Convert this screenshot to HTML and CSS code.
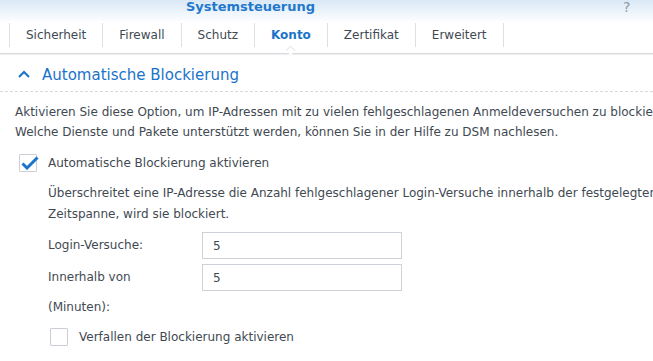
FILE: index.html
```html
<!DOCTYPE html>
<html lang="de">
<head>
<meta charset="utf-8">
<link rel="stylesheet" href="styles.css">
</head>
<body>
<div class="window">
  <header class="titlebar">
    <span class="title">Systemsteuerung</span>
    <span class="help">?</span>
  </header>
  <nav class="tabs">
    <div class="tab">Sicherheit</div>
    <div class="tab">Firewall</div>
    <div class="tab">Schutz</div>
    <div class="tab active">Konto</div>
    <div class="tab">Zertifikat</div>
    <div class="tab">Erweitert</div>
  </nav>
  <main class="content">
    <div class="section-head">
      <svg class="chev" width="12" height="8" viewBox="0 0 12 8"><path d="M1 7 L6 2 L11 7" fill="none" stroke="#1a73c9" stroke-width="2"/></svg>
      <span>Automatische Blockierung</span>
    </div>
    <p class="intro">Aktivieren Sie diese Option, um IP-Adressen mit zu vielen fehlgeschlagenen Anmeldeversuchen zu blockieren.<br>Welche Dienste und Pakete unterstützt werden, können Sie in der Hilfe zu DSM nachlesen.</p>
    <label class="check">
      <span class="box checked"><svg width="18" height="14" viewBox="0 0 18 14"><path d="M1.5 7.5 L6 12 L16.5 1.5" fill="none" stroke="#1b74cc" stroke-width="3"/></svg></span>
      <span>Automatische Blockierung aktivieren</span>
    </label>
    <div class="indent">
      <p class="desc">Überschreitet eine IP-Adresse die Anzahl fehlgeschlagener Login-Versuche innerhalb der festgelegten<br>Zeitspanne, wird sie blockiert.</p>
      <div class="form">
        <div class="lbl">Login-Versuche:</div>
        <div class="input">5</div>
        <div class="lbl">Innerhalb von<span class="minuten">(Minuten):</span></div>
        <div class="input">5</div>
      </div>
      <label class="check check2">
        <span class="box"></span>
        <span>Verfallen der Blockierung aktivieren</span>
      </label>
    </div>
  </main>
</div>
</body>
</html>
```
FILE: styles.css
```css
* { box-sizing: border-box; margin: 0; padding: 0; }
html, body { width: 653px; height: 361px; overflow: hidden; background: #fff; }
body { font-family: "DejaVu Sans", Verdana, sans-serif; font-size: 12px; color: #3f4952; }
.window { width: 653px; }
.titlebar {
  height: 22px;
  background: linear-gradient(#d9e8f6, #fdfeff);
  position: relative;
  display: flex;
  justify-content: center;
}
.title {
  font-size: 13px; font-weight: bold; color: #1f78cc;
  position: relative; top: -1px; left: -76px;
}
.help {
  position: absolute; left: 623px; top: -1px;
  font-size: 14px; color: #8f99a3;
}
.tabs {
  display: flex;
  height: 32px;
  padding: 1px 0 0 9px;
  border-bottom: 1px solid #d6dade;
  box-shadow: 0 1px 1px rgba(0,0,0,0.06);
  position: relative;
}
.tab {
  border-left: 1px solid #dde1e5;
  height: 24px;
  display: flex; align-items: center; justify-content: center;
  padding: 0 16px;
  font-size: 12px;
  color: #3f4952;
}
.tab:nth-child(6) { border-right: 1px solid #dde1e5; }
.tab.active { color: #1a73c9; font-weight: bold; position: relative; }
.tab.active::after {
  content: ""; position: absolute; left: 50%; bottom: -9px; margin-left: -6px;
  width: 10px; height: 10px; background: #fff;
  border-left: 1px solid #d6dade; border-top: 1px solid #d6dade;
  transform: rotate(45deg) scale(0.6, 0.6);
}
.section-head {
  display: flex; align-items: center;
  height: 38px;
  padding-top: 4px;
  border-bottom: 1px dashed #d5d9dd;
  padding-left: 18px;
  font-size: 15px; color: #1a73c9;
}
.chev { margin-right: 12px; margin-top: -1px; }
.intro { padding: 10px 0 0 15px; line-height: 20px; white-space: nowrap; }
.check { display: flex; align-items: center; margin-top: 12px; padding-left: 19px; height: 18px; }
.box {
  width: 18px; height: 18px; border: 1px solid #c9cfd5; border-radius: 1px;
  background: #fff; margin-right: 11px; position: relative;
  display: inline-block;
}
.box svg { position: absolute; left: 1px; top: 1px; }
.indent { padding-left: 48px; }
.desc { margin-top: 11px; line-height: 21px; white-space: nowrap; }
.form {
  display: grid; grid-template-columns: 154px 200px;
  row-gap: 5px; margin-top: 7px;
}
.lbl { line-height: 27px; }
.minuten { display: block; line-height: 27px; margin-top: 3px; }
.input {
  height: 27px; border: 1px solid #ccd2d8; padding-left: 10px;
  display: flex; align-items: center; color: #3f4952;
}
.check2 { padding-left: 2px; margin-top: 7px; }
```
